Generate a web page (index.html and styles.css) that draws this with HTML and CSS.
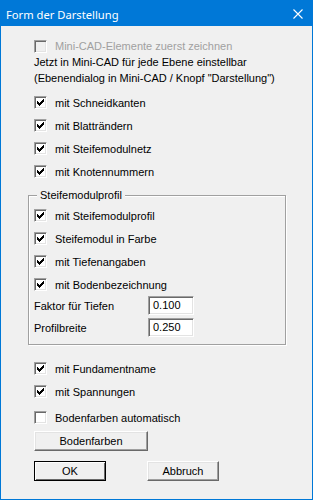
FILE: index.html
```html
<!DOCTYPE html>
<html>
<head>
    <meta charset="UTF-8">
    <title>Form der Darstellung</title>
    <link rel="stylesheet" href="styles.css">
</head>
<body>
<div class="window">
    <div class="titlebar">
        <span class="title">Form der Darstellung</span>
        <svg class="close" width="10" height="10" viewBox="0 0 10 10">
            <path d="M0.5 0.5L9.5 9.5M9.5 0.5L0.5 9.5" stroke="#fff" stroke-width="1.1" fill="none"/>
        </svg>
    </div>

    <div class="dialog">
        <div class="row small disabled"><span class="cb"></span>Mini-CAD-Elemente zuerst zeichnen</div>
        <p class="note">Jetzt in Mini-CAD für jede Ebene einstellbar<br>(Ebenendialog in Mini-CAD / Knopf "Darstellung")</p>

        <div class="options">
            <div class="row"><span class="cb"><svg class="tick" width="7" height="7" viewBox="0 0 7 7"><path d="M6 0h1v1h-1zM5 1h2v1h-2zM0 2h1v1h-1zM4 2h3v1h-3zM0 3h2v1h-2zM3 3h3v1h-3zM0 4h5v1h-5zM1 5h3v1h-3zM2 6h1v1h-1z"/></svg></span>mit Schneidkanten</div>
            <div class="row"><span class="cb"><svg class="tick" width="7" height="7" viewBox="0 0 7 7"><path d="M6 0h1v1h-1zM5 1h2v1h-2zM0 2h1v1h-1zM4 2h3v1h-3zM0 3h2v1h-2zM3 3h3v1h-3zM0 4h5v1h-5zM1 5h3v1h-3zM2 6h1v1h-1z"/></svg></span>mit Blatträndern</div>
            <div class="row"><span class="cb"><svg class="tick" width="7" height="7" viewBox="0 0 7 7"><path d="M6 0h1v1h-1zM5 1h2v1h-2zM0 2h1v1h-1zM4 2h3v1h-3zM0 3h2v1h-2zM3 3h3v1h-3zM0 4h5v1h-5zM1 5h3v1h-3zM2 6h1v1h-1z"/></svg></span>mit Steifemodulnetz</div>
            <div class="row"><span class="cb"><svg class="tick" width="7" height="7" viewBox="0 0 7 7"><path d="M6 0h1v1h-1zM5 1h2v1h-2zM0 2h1v1h-1zM4 2h3v1h-3zM0 3h2v1h-2zM3 3h3v1h-3zM0 4h5v1h-5zM1 5h3v1h-3zM2 6h1v1h-1z"/></svg></span>mit Knotennummern</div>
        </div>

        <fieldset class="group">
            <legend>Steifemodulprofil</legend>
            <div class="row"><span class="cb"><svg class="tick" width="7" height="7" viewBox="0 0 7 7"><path d="M6 0h1v1h-1zM5 1h2v1h-2zM0 2h1v1h-1zM4 2h3v1h-3zM0 3h2v1h-2zM3 3h3v1h-3zM0 4h5v1h-5zM1 5h3v1h-3zM2 6h1v1h-1z"/></svg></span>mit Steifemodulprofil</div>
            <div class="row"><span class="cb"><svg class="tick" width="7" height="7" viewBox="0 0 7 7"><path d="M6 0h1v1h-1zM5 1h2v1h-2zM0 2h1v1h-1zM4 2h3v1h-3zM0 3h2v1h-2zM3 3h3v1h-3zM0 4h5v1h-5zM1 5h3v1h-3zM2 6h1v1h-1z"/></svg></span>Steifemodul in Farbe</div>
            <div class="row"><span class="cb"><svg class="tick" width="7" height="7" viewBox="0 0 7 7"><path d="M6 0h1v1h-1zM5 1h2v1h-2zM0 2h1v1h-1zM4 2h3v1h-3zM0 3h2v1h-2zM3 3h3v1h-3zM0 4h5v1h-5zM1 5h3v1h-3zM2 6h1v1h-1z"/></svg></span>mit Tiefenangaben</div>
            <div class="row"><span class="cb"><svg class="tick" width="7" height="7" viewBox="0 0 7 7"><path d="M6 0h1v1h-1zM5 1h2v1h-2zM0 2h1v1h-1zM4 2h3v1h-3zM0 3h2v1h-2zM3 3h3v1h-3zM0 4h5v1h-5zM1 5h3v1h-3zM2 6h1v1h-1z"/></svg></span>mit Bodenbezeichnung</div>
            <div class="field"><span class="field-label">Faktor für Tiefen</span><span class="edit">0.100</span></div>
            <div class="field"><span class="field-label">Profilbreite</span><span class="edit">0.250</span></div>
        </fieldset>

        <div class="options after">
            <div class="row"><span class="cb"><svg class="tick" width="7" height="7" viewBox="0 0 7 7"><path d="M6 0h1v1h-1zM5 1h2v1h-2zM0 2h1v1h-1zM4 2h3v1h-3zM0 3h2v1h-2zM3 3h3v1h-3zM0 4h5v1h-5zM1 5h3v1h-3zM2 6h1v1h-1z"/></svg></span>mit Fundamentname</div>
            <div class="row"><span class="cb"><svg class="tick" width="7" height="7" viewBox="0 0 7 7"><path d="M6 0h1v1h-1zM5 1h2v1h-2zM0 2h1v1h-1zM4 2h3v1h-3zM0 3h2v1h-2zM3 3h3v1h-3zM0 4h5v1h-5zM1 5h3v1h-3zM2 6h1v1h-1z"/></svg></span>mit Spannungen</div>
            <div class="row auto"><span class="cb"></span>Bodenfarben automatisch</div>
        </div>

        <div class="btn wide">Bodenfarben</div>
        <div class="buttons">
            <div class="btn default">OK</div>
            <div class="btn">Abbruch</div>
        </div>
    </div>
</div>
</body>
</html>
```

FILE: styles.css
```css
html,
body {
    margin: 0;
    padding: 0;
    background: #f0f0f0;
}

.window {
    box-sizing: border-box;
    width: 313px;
    height: 500px;
    border: 1px solid #0078d7;
    background: #f0f0f0;
    font-family: "Liberation Sans", Arial, sans-serif;
    font-size: 11px;
    color: #000;
}

.titlebar {
    height: 25px;
    background: #0078d7;
    color: #fff;
    display: flex;
    align-items: center;
    padding: 0 9px 0 5px;
}

.title {
    flex: 1;
    font-family: "Noto Sans", sans-serif;
    font-size: 11.2px;
    margin-top: 1px;
}

.close {
    display: block;
    margin-top: 1px;
}

.dialog {
    padding: 12px 0 0 33px;
}

.row {
    display: flex;
    align-items: center;
    height: 23px;
    white-space: nowrap;
}

.row.small {
    height: 16px;
}

.disabled {
    color: #a0a0a0;
}

.cb {
    box-sizing: border-box;
    width: 13px;
    height: 13px;
    flex: none;
    margin-right: 8px;
    border: 1px solid;
    border-color: #a0a0a0 #fff #fff #a0a0a0;
    box-shadow: inset 1px 1px #696969, inset -1px -1px #e3e3e3;
    background: #fff;
}

.disabled .cb {
    background: #f0f0f0;
}

.tick {
    display: block;
    margin: 2px;
    shape-rendering: crispEdges;
}

.note {
    margin: 0;
    line-height: 16px;
}

.options {
    margin-top: 5px;
}

.group {
    width: 258px;
    box-sizing: border-box;
    margin: 4px 0 0 -6px;
    padding: 1px 0 7px 5px;
    border: 1px solid #a0a0a0;
    box-shadow: inset 1px 1px #fff, 1px 1px #fff;
}

.group legend {
    padding: 0 3px;
    margin-left: 3px;
    line-height: 16px;
    background: #f0f0f0;
}

.field {
    display: flex;
    align-items: center;
    height: 19px;
}

.field + .field {
    margin-top: 3px;
}

.field-label {
    width: 114px;
}

.edit {
    box-sizing: border-box;
    width: 46px;
    height: 19px;
    padding: 0 0 0 4px;
    line-height: 17px;
    border: 1px solid;
    border-color: #a0a0a0 #fff #fff #a0a0a0;
    box-shadow: inset 1px 1px #696969, inset -1px -1px #e3e3e3;
    background: #fff;
}

.after {
    margin-top: 12px;
}

.row.auto {
    margin-top: 3px;
}

.btn {
    box-sizing: border-box;
    width: 72px;
    height: 20px;
    line-height: 18px;
    text-align: center;
    border: 1px solid;
    border-color: #fff #696969 #696969 #fff;
    box-shadow: inset -1px -1px #a0a0a0, inset 1px 1px #e3e3e3;
    background: #f0f0f0;
}

.btn.wide {
    width: 114px;
    margin-top: 2px;
}

.btn.default {
    border: 1px solid #000;
    box-shadow: inset 1px 1px #fff, inset -1px -1px #696969;
}

.buttons {
    display: flex;
    gap: 41px;
    margin-top: 10px;
}
```
